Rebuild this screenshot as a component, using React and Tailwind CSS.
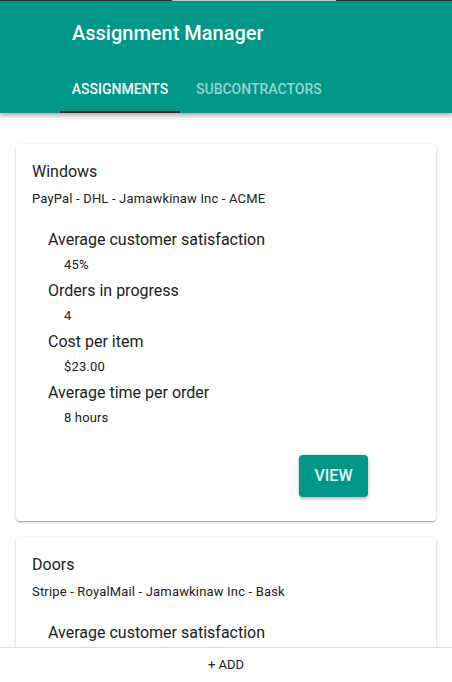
import React from 'react';

const assignments = [
  {
    title: 'Windows',
    parties: 'PayPal - DHL - Jamawkinaw Inc - ACME',
    stats: [
      ['Average customer satisfaction', '45%'],
      ['Orders in progress', '4'],
      ['Cost per item', '$23.00'],
      ['Average time per order', '8 hours'],
    ],
  },
  {
    title: 'Doors',
    parties: 'Stripe - RoyalMail - Jamawkinaw Inc - Bask',
    stats: [
      ['Average customer satisfaction', '62%'],
      ['Orders in progress', '2'],
      ['Cost per item', '$41.00'],
      ['Average time per order', '12 hours'],
    ],
  },
];

const AssignmentCard = ({ item }) => (
  <div className="bg-white rounded-[4px] shadow-[0_1px_3px_rgba(0,0,0,0.2),0_1px_1px_rgba(0,0,0,0.14),0_2px_1px_-1px_rgba(0,0,0,0.12)] px-4 pt-4 pb-6 shrink-0">
    <div className="text-[16px] leading-6 text-[#212121]">{item.title}</div>
    <div className="mt-[5px] text-[13px] leading-5 tracking-[0.17px] text-[#212121]">{item.parties}</div>

    <div className="mt-[19px] pl-4">
      {item.stats.map(([label, value]) => (
        <div key={label} className="mb-[3px]">
          <div className="text-[16px] leading-6 text-[#212121]">{label}</div>
          <div className="pl-4 pt-[2px] text-[13px] leading-[22px] tracking-[0.15px] text-[#212121]">{value}</div>
        </div>
      ))}
    </div>

    <div className="mt-[26px] flex justify-end pr-[52px]">
      <button className="h-[42px] w-[69px] rounded-[4px] bg-[#009688] text-[16px] font-medium text-[#e3f6f4] shadow-[0_1px_5px_rgba(0,0,0,0.2),0_2px_2px_rgba(0,0,0,0.14)]">
        VIEW
      </button>
    </div>
  </div>
);

export default function App() {
  return (
    <div className="h-[682px] flex flex-col bg-white overflow-hidden" style={{ fontFamily: 'Roboto, "Noto Sans", sans-serif' }}>
      <div className="flex h-px shrink-0">
        <div className="w-[172px] bg-[#26323a]" />
        <div className="w-[164px] bg-[#c8c8c8]" />
        <div className="flex-1 bg-[#26323a]" />
      </div>

      <header className="bg-[#009688] shrink-0 shadow-[0_2px_4px_rgba(0,0,0,0.2),0_4px_5px_rgba(0,0,0,0.14)] relative z-10">
        <div className="h-16 flex items-center pl-[72px]">
          <h1 className="text-[20px] font-medium text-white">Assignment Manager</h1>
        </div>
        <nav className="h-12 flex pl-[60px]">
          <div className="relative w-[120px] flex items-center justify-center text-[14px] font-medium text-white">
            ASSIGNMENTS
            <span className="absolute bottom-0 left-0 right-0 h-[2px] bg-[#2b2b2b]" />
          </div>
          <div className="flex items-center pl-4 text-[14px] font-medium text-white/60">SUBCONTRACTORS</div>
        </nav>
      </header>

      <main className="flex-1 overflow-hidden flex flex-col gap-4 px-4 pt-[31px]">
        {assignments.map((item) => (
          <AssignmentCard key={item.title} item={item} />
        ))}
      </main>

      <footer className="h-[35px] shrink-0 border-t border-[#dcdcdc] bg-white flex items-center justify-center text-[13px] text-[#212121]">
        + ADD
      </footer>
    </div>
  );
}
